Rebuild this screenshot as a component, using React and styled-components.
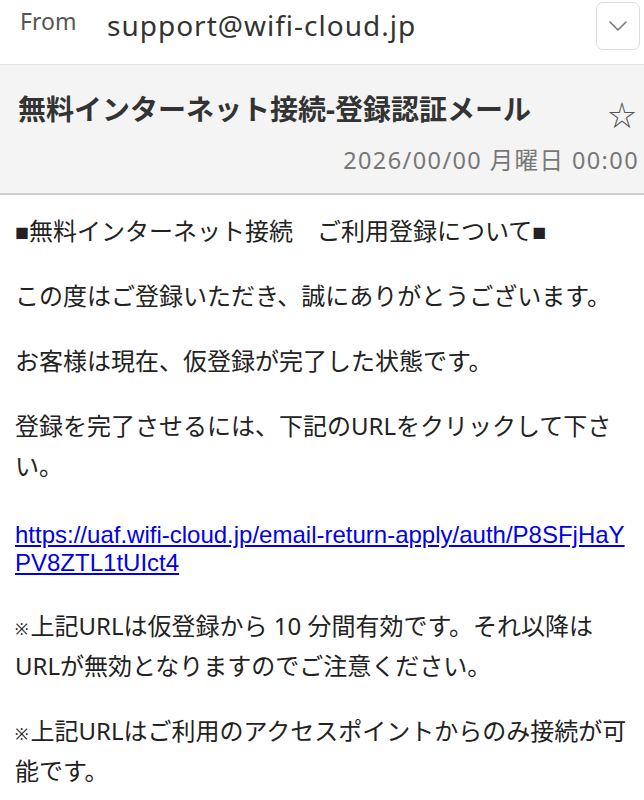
import React from "react";
import styled, { createGlobalStyle } from "styled-components";

const Global = createGlobalStyle`
  html, body { margin: 0; padding: 0; background: #fff; }
  body { font-family: "Noto Sans", "Noto Sans CJK JP", sans-serif; }
  * { box-sizing: border-box; }
`;

const Page = styled.div`
  width: 644px;
  background: #fff;
`;

const FromRow = styled.div`
  height: 65px;
  display: flex;
  align-items: flex-start;
  padding: 0 4px 0 20px;
  border-bottom: 1px solid #e2e2e2;
`;

const FromLabel = styled.span`
  font-size: 23px;
  color: #555;
  line-height: 1;
  margin-top: 10px;
  width: 87px;
  flex-shrink: 0;
`;

const Sender = styled.span`
  font-size: 28px;
  letter-spacing: 1px;
  color: #333;
  line-height: 1;
  margin-top: 11px;
  flex: 1;
`;

const DropButton = styled.button`
  width: 44px;
  height: 48px;
  margin-top: 2px;
  border: 1px solid #dcdcdc;
  border-radius: 7px;
  background: #fff;
  display: flex;
  align-items: center;
  justify-content: center;
  padding: 0;
`;

const SubjectArea = styled.div`
  background: #f4f4f4;
  border-bottom: 2px solid #cfcfcf;
  padding: 24px 8px 0 18px;
  height: 130px;
`;

const SubjectRow = styled.div`
  display: flex;
  align-items: center;
  justify-content: space-between;
`;

const Title = styled.h1`
  margin: 0;
  font-size: 28px;
  font-weight: 700;
  color: #333;
  line-height: 34px;
  white-space: nowrap;
`;

const Star = styled.span`
  font-size: 28px;
  color: #555;
  line-height: 1;
  margin-top: 12px;
`;

const DateLine = styled.div`
  text-align: right;
  font-size: 23.5px;
  letter-spacing: 1.4px;
  color: #777;
  line-height: 1;
  margin-top: 20px;
  margin-right: -3px;
`;

const Body = styled.div`
  padding: 16px 15px 0 15px;
  display: flex;
  flex-direction: column;
  gap: 25px;
`;

const Para = styled.p`
  margin: 0;
  font-size: 24px;
  line-height: 40px;
  color: #222;
`;

const Mark = styled.span`
  font-size: ${(p) => p.$size || 14}px;
  line-height: 1;
  vertical-align: ${(p) => p.$lift || 0}px;
  margin-right: ${(p) => p.$gap || 0}px;
`;

const LinkBlock = styled.p`
  margin: 10px 0 4px;
  font-family: "Liberation Sans", Arial, sans-serif;
  font-size: 24px;
  line-height: 28px;
  word-break: break-all;
`;

const Link = styled.a`
  color: #0000ee;
  text-decoration: underline;
  text-underline-offset: 2px;
`;

const Chevron = () => (
  <svg width="18" height="10" viewBox="0 0 18 10" fill="none">
    <path d="M1 1l8 8 8-8" stroke="#777" strokeWidth="1.6" strokeLinecap="round" strokeLinejoin="round" />
  </svg>
);

export default function App() {
  return (
    <Page>
      <Global />
      <FromRow>
        <FromLabel>From</FromLabel>
        <Sender>support@wifi-cloud.jp</Sender>
        <DropButton aria-label="詳細">
          <Chevron />
        </DropButton>
      </FromRow>
      <SubjectArea>
        <SubjectRow>
          <Title>無料インターネット接続-登録認証メール</Title>
          <Star>☆</Star>
        </SubjectRow>
        <DateLine>2026/00/00 月曜日 00:00</DateLine>
      </SubjectArea>
      <Body>
        <Para>
          <Mark $size={14} $lift={2}>■</Mark>無料インターネット接続　ご利用登録について<Mark $size={14} $lift={2}>■</Mark>
        </Para>
        <Para>この度はご登録いただき、誠にありがとうございます。</Para>
        <Para>お客様は現在、仮登録が完了した状態です。</Para>
        <Para>登録を完了させるには、下記のURLをクリックして下さい。</Para>
        <LinkBlock>
          <Link href="#">
            https://uaf.wifi-cloud.jp/email-return-apply/auth/P8SFjHaYPV8ZTL1tUIct4
          </Link>
        </LinkBlock>
        <Para>
          <Mark $size={16} $gap={2}>※</Mark>上記URLは仮登録から 10 分間有効です。それ以降はURLが無効となりますのでご注意ください。
        </Para>
        <Para>
          <Mark $size={16} $gap={2}>※</Mark>上記URLはご利用のアクセスポイントからのみ接続が可能です。
        </Para>
      </Body>
    </Page>
  );
}
